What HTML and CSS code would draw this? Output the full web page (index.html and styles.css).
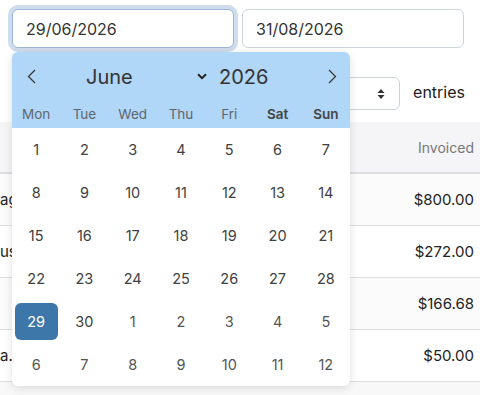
FILE: index.html
```html
<!DOCTYPE html>
<html lang="en">
<head>
  <meta charset="UTF-8">
  <title>Invoices - Date Range</title>
  <meta name="viewport" content="width=device-width, initial-scale=1">
  <link rel="stylesheet" href="styles.css">
</head>
<body>

  <div class="page">
    <div class="range">
      <input type="text" class="date-input active" value="29/06/2026" readonly>
      <input type="text" class="date-input" value="31/08/2026" readonly>
    </div>

    <div class="length">
      <label class="length-label">Show</label>
      <div class="length-select">
        <span>10</span>
        <svg width="8" height="12" viewBox="0 0 8 12"><path d="M4 1 L7.5 5 H0.5 Z M4 11 L7.5 7 H0.5 Z" fill="#333"/></svg>
      </div>
      <span class="length-text">entries</span>
    </div>

    <table class="invoices">
      <thead>
        <tr>
          <th class="name"></th>
          <th class="amount">Invoiced</th>
        </tr>
      </thead>
      <tbody>
        <tr class="odd">
          <td class="name">ag</td>
          <td class="amount">$800.00</td>
        </tr>
        <tr>
          <td class="name">us</td>
          <td class="amount">$272.00</td>
        </tr>
        <tr class="odd">
          <td class="name"></td>
          <td class="amount">$166.68</td>
        </tr>
        <tr>
          <td class="name">a.</td>
          <td class="amount">$50.00</td>
        </tr>
      </tbody>
    </table>
  </div>

  <!-- date picker popup, opened under the start date -->
  <div class="calendar">
    <div class="cal-head">
      <div class="cal-nav">
        <span class="nav-btn prev">
          <svg width="9" height="15" viewBox="0 0 9 15"><path d="M8 1 L1.5 7.5 L8 14" fill="none" stroke="#333" stroke-width="1.2"/></svg>
        </span>
        <div class="month-select">
          <span>June</span>
          <svg width="10" height="7" viewBox="0 0 10 7"><path d="M1 1.2 L5 5.2 L9 1.2" fill="none" stroke="#222" stroke-width="2"/></svg>
        </div>
        <span class="year">2026</span>
        <span class="nav-btn next">
          <svg width="9" height="15" viewBox="0 0 9 15"><path d="M1 1 L7.5 7.5 L1 14" fill="none" stroke="#333" stroke-width="1.2"/></svg>
        </span>
      </div>
      <div class="weekdays">
        <span>Mon</span><span>Tue</span><span>Wed</span><span>Thu</span><span>Fri</span>
        <span class="weekend">Sat</span><span class="weekend">Sun</span>
      </div>
    </div>
    <div class="days" id="days"></div>
  </div>

  <script>
    const days = document.getElementById("days");
    const cells = [];
    for (let d = 1; d <= 30; d++) cells.push({ n: d, cls: "" });
    for (let d = 1; d <= 12; d++) cells.push({ n: d, cls: "next-month" });

    cells.forEach((c, i) => {
      const cell = document.createElement("div");
      cell.className = "day-cell";
      const span = document.createElement("span");
      span.className = "day " + c.cls + (i === 28 ? " selected" : "");
      span.textContent = c.n;
      cell.appendChild(span);
      days.appendChild(cell);
    });
  </script>
</body>
</html>
```

FILE: styles.css
```css
:root {
  --head: #b0d6f8;
  --selected: #3d77a9;
  --border: #ced4da;
  --text: #333;
}

* { box-sizing: border-box; }

body {
  margin: 0;
  font-family: Inter, 'Noto Sans', sans-serif;
  background-color: #f8f8f8;
  color: var(--text);
}

.page {
  background-color: #fff;
}

.range {
  display: flex;
  gap: 8px;
  padding: 9px 16px 0 12px;
}

.date-input {
  flex: 1;
  min-width: 0;
  height: 39px;
  padding: 0 13px;
  font-family: inherit;
  font-size: 16px;
  color: var(--text);
  border: 1px solid var(--border);
  border-radius: 6px;
  background: #fff;
  outline: none;
}

.date-input.active {
  border-color: #9bb8d7;
  box-shadow: 0 0 0 4px #cfdceb;
}

.length {
  display: flex;
  align-items: center;
  justify-content: flex-end;
  gap: 13px;
  padding: 0 15px 0 12px;
  margin-top: 29px;
  height: 33px;
}

.length-label {
  font-size: 16px;
  margin-right: auto;
}

.length-select {
  display: flex;
  align-items: center;
  justify-content: space-between;
  width: 90px;
  height: 33px;
  padding: 0 14px 0 12px;
  border: 1px solid var(--border);
  border-radius: 6px;
  font-size: 15px;
}

.length-text {
  font-size: 16px;
  color: #222;
  margin-bottom: 3px;
}

.invoices {
  width: 100%;
  border-collapse: collapse;
  margin-top: 12px;
  table-layout: fixed;
}

.invoices th {
  height: 51px;
  background-color: #f5f5f7;
  font-size: 14px;
  font-weight: 400;
  color: #777;
  border-bottom: 2px solid #dedede;
}

.invoices td {
  height: 52px;
  font-size: 15px;
  color: #222;
  border-bottom: 1px solid #dedede;
}

.invoices tr.odd td {
  background-color: #fbfbfb;
}

.invoices .name {
  padding: 0;
  text-align: left;
  white-space: nowrap;
}

.invoices .amount {
  width: 120px;
  text-align: right;
  padding-right: 6px;
}

/* calendar popup */

.calendar {
  position: absolute;
  left: 12px;
  top: 52px;
  width: 338px;
  background-color: #fff;
  border-radius: 6px;
  box-shadow: 0 2px 10px rgba(0,0,0,0.12);
  overflow: hidden;
}

.cal-head {
  background-color: var(--head);
}

.cal-nav {
  display: flex;
  align-items: center;
  height: 49px;
}

.nav-btn {
  display: flex;
  align-items: center;
  justify-content: center;
  height: 48px;
}

.nav-btn.prev { width: 39px; }

.nav-btn.next {
  width: 35px;
  margin-left: auto;
}

.month-select {
  display: flex;
  align-items: center;
  justify-content: space-between;
  width: 156px;
  padding-left: 35px;
  font-size: 20px;
  color: #333;
}

.year {
  margin-left: 12px;
  font-size: 20px;
  color: #333;
}

.weekdays {
  display: grid;
  grid-template-columns: repeat(7, 1fr);
  height: 27px;
  align-items: center;
  padding-bottom: 2px;
}

.weekdays span {
  text-align: center;
  font-size: 13.5px;
  color: #5f666d;
}

.weekdays .weekend {
  font-weight: 600;
  color: #444;
}

.days {
  display: grid;
  grid-template-columns: repeat(7, 1fr);
  grid-auto-rows: 43px;
}

.day-cell {
  display: flex;
  align-items: center;
  justify-content: center;
}

.day {
  display: flex;
  align-items: center;
  justify-content: center;
  width: 43px;
  height: 37px;
  border-radius: 6px;
  font-size: 14.5px;
  color: #404040;
}

.day.next-month {
  color: #555;
}

.day.selected {
  background-color: var(--selected);
  color: #fff;
}
```
